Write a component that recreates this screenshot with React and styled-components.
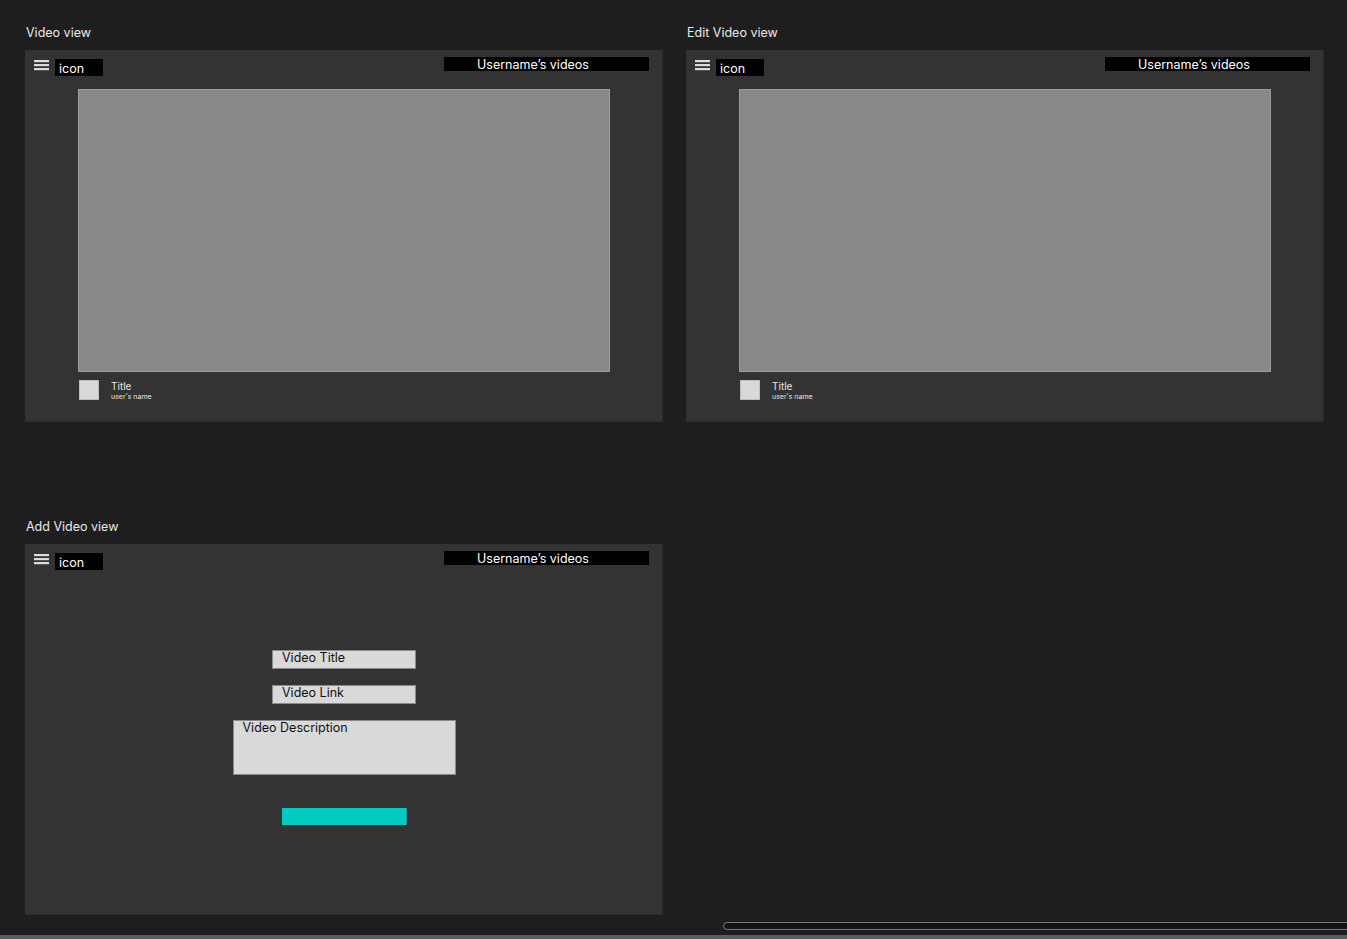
import React from "react";
import styled, { createGlobalStyle } from "styled-components";

const Global = createGlobalStyle`
  html, body { margin: 0; padding: 0; background: #1e1e1e; }
  body { font-family: Inter, "Noto Sans", Arial, sans-serif; overflow: hidden; }
  * { box-sizing: border-box; }
`;

const Page = styled.div`
  height: 939px;
  display: flex;
  flex-direction: column;
  background: #1e1e1e;
`;

const Canvas = styled.div`
  flex: 1;
  padding: 24px 0 0 25px;
  display: grid;
  grid-template-columns: 638px 638px;
  grid-auto-rows: min-content;
  column-gap: 23px;
  row-gap: 96px;
`;

const Section = styled.section`
  display: flex;
  flex-direction: column;
`;

const Label = styled.div`
  color: #e8e8e8;
  font-size: 12.5px;
  line-height: 17px;
  height: 16px;
  margin: 0 0 10px 1px;
`;

const Frame = styled.div`
  width: 638px;
  height: ${(p) => p.$h}px;
  background: #333333;
  box-shadow: inset -1px -1px 0 #2b2b2b;
  display: flex;
  flex-direction: column;
`;

const TopBar = styled.div`
  height: 39px;
  display: flex;
  align-items: flex-start;
  padding: 0 14px 0 9px;
`;

const Burger = styled.svg`
  width: 15px;
  height: 12px;
  margin-top: 10px;
  flex: none;
`;

const IconBox = styled.div`
  width: 48px;
  height: 17px;
  margin: 9px 0 0 6px;
  background: #000;
  color: #fff;
  font-size: 12.5px;
  line-height: 19px;
  padding-left: 4px;
`;

const UserBox = styled.div`
  margin-left: auto;
  margin-top: 7px;
  width: 205px;
  height: 14px;
  background: #000;
  color: #fff;
  font-size: 12.5px;
  line-height: 16px;
  padding-left: 33px;
  white-space: nowrap;
`;

const Player = styled.div`
  align-self: center;
  width: 532px;
  height: 283px;
  background: #888888;
  border: 1px solid #9c9c9c;
`;

const Meta = styled.div`
  display: flex;
  align-items: flex-start;
  gap: 12px;
  padding-left: 54px;
  margin-top: 8px;
`;

const Avatar = styled.div`
  width: 20px;
  height: 20px;
  background: #d9d9d9;
  border: 1px solid #bdbdbd;
`;

const MetaText = styled.div`
  display: flex;
  flex-direction: column;
  color: #e6e6e6;
`;

const MetaTitle = styled.span`
  font-size: 10px;
  line-height: 12px;
`;

const MetaSub = styled.span`
  font-size: 7px;
  line-height: 9px;
`;

const Form = styled.div`
  display: flex;
  flex-direction: column;
  align-items: center;
  margin-top: 67px;
`;

const Field = styled.div`
  width: ${(p) => p.$w}px;
  height: ${(p) => p.$h}px;
  background: #d9d9d9;
  border: 1px solid #8a8a8a;
  color: #111;
  font-size: 12.5px;
  line-height: 14px;
  padding: 0 0 0 9px;
  margin-bottom: ${(p) => p.$mb}px;
`;

const Submit = styled.button`
  width: 125px;
  height: 17px;
  margin: 0;
  padding: 0;
  border: none;
  border-right: 1px solid #0aa89f;
  background: #00cbc0;
`;

const Footer = styled.div`
  display: flex;
  flex-direction: column;
`;

const ScrollRow = styled.div`
  height: 13px;
  padding: 0 0 0 723px;
`;

const ScrollTrack = styled.div`
  height: 8px;
  margin-right: -10px;
  border: 1px solid #7a7a7a;
  border-radius: 4px;
  background: #141414;
`;

const BottomStrip = styled.div`
  height: 4px;
  background: #5c5c60;
`;

const Hamburger = () => (
  <Burger viewBox="0 0 15 12">
    <rect x="0" y="0" width="15" height="2.2" fill="#dcdcdc" />
    <rect x="0" y="4" width="15" height="2.2" fill="#dcdcdc" />
    <rect x="0" y="8" width="15" height="2.2" fill="#dcdcdc" />
  </Burger>
);

const Header = () => (
  <TopBar>
    <Hamburger />
    <IconBox>icon</IconBox>
    <UserBox>Username’s videos</UserBox>
  </TopBar>
);

const VideoFrame = () => (
  <Frame $h={372}>
    <Header />
    <Player />
    <Meta>
      <Avatar />
      <MetaText>
        <MetaTitle>Title</MetaTitle>
        <MetaSub>user's name</MetaSub>
      </MetaText>
    </Meta>
  </Frame>
);

export default function App() {
  return (
    <Page>
      <Global />
      <Canvas>
        <Section>
          <Label>Video view</Label>
          <VideoFrame />
        </Section>
        <Section>
          <Label>Edit Video view</Label>
          <VideoFrame />
        </Section>
        <Section>
          <Label>Add Video view</Label>
          <Frame $h={371}>
            <Header />
            <Form>
              <Field $w={144} $h={19} $mb={16}>Video Title</Field>
              <Field $w={144} $h={19} $mb={16}>Video Link</Field>
              <Field $w={223} $h={55} $mb={33}>Video Description</Field>
              <Submit aria-label="submit" />
            </Form>
          </Frame>
        </Section>
      </Canvas>
      <Footer>
        <ScrollRow>
          <ScrollTrack />
        </ScrollRow>
        <BottomStrip />
      </Footer>
    </Page>
  );
}
